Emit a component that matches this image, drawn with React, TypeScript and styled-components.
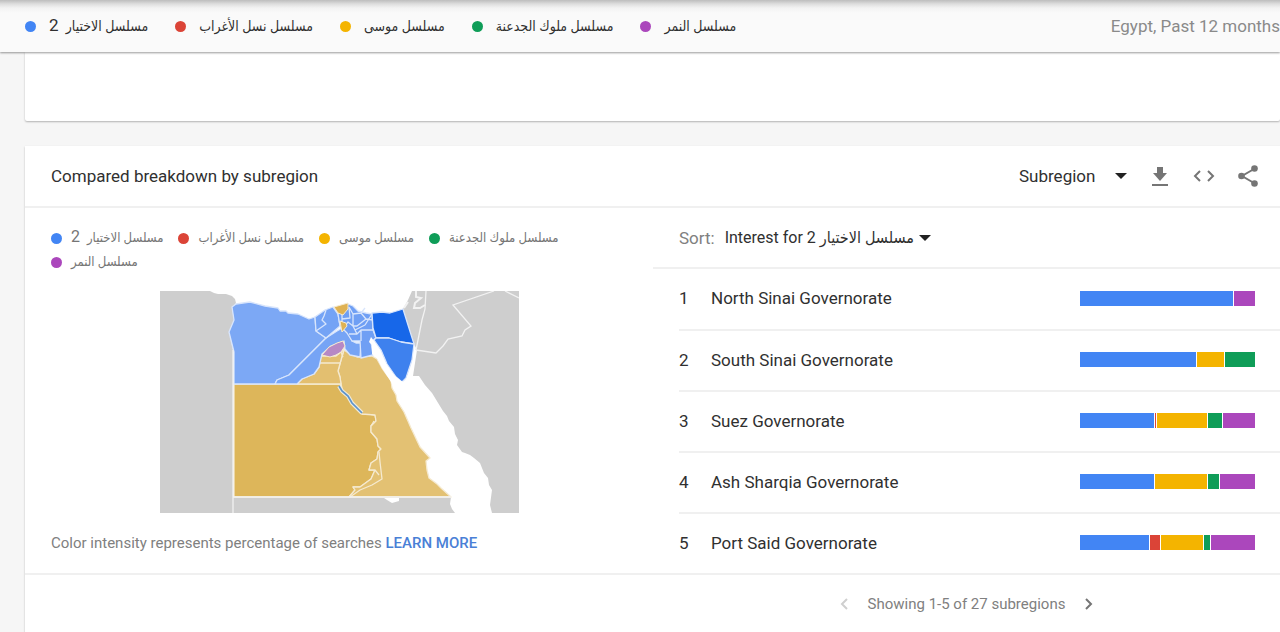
import React from "react";
import styled, { createGlobalStyle } from "styled-components";

const palette = {
  blue: "#4285f4",
  red: "#db4437",
  yellow: "#f4b400",
  green: "#0f9d58",
  purple: "#ab47bc",
};
type Tone = keyof typeof palette;

const terms: { label: string; part?: string; tone: Tone }[] = [
  { label: "مسلسل الاختيار", part: "2", tone: "blue" },
  { label: "مسلسل نسل الأغراب", tone: "red" },
  { label: "مسلسل موسى", tone: "yellow" },
  { label: "مسلسل ملوك الجدعنة", tone: "green" },
  { label: "مسلسل النمر", tone: "purple" },
];

const regions: { name: string; shares: [Tone, number][] }[] = [
  { name: "North Sinai Governorate", shares: [["blue", 153], ["purple", 21]] },
  { name: "South Sinai Governorate", shares: [["blue", 116], ["yellow", 27], ["green", 30]] },
  { name: "Suez Governorate", shares: [["blue", 74], ["red", 1], ["yellow", 50], ["green", 14], ["purple", 32]] },
  { name: "Ash Sharqia Governorate", shares: [["blue", 74], ["yellow", 52], ["green", 11], ["purple", 35]] },
  { name: "Port Said Governorate", shares: [["blue", 69], ["red", 10], ["yellow", 42], ["green", 6], ["purple", 44]] },
];

const GlobalStyle = createGlobalStyle`
  *, *::before, *::after { box-sizing: border-box; }
  body {
    margin: 0;
    background: #f6f6f6;
    color: #303030;
    font: 17px/24px Roboto, "DejaVu Sans Condensed", "DejaVu Sans", sans-serif;
    overflow-x: hidden;
  }
  button, select { font: inherit; color: inherit; }
`;

const TopBar = styled.header`
  position: sticky;
  top: 0;
  z-index: 2;
  display: flex;
  align-items: center;
  justify-content: space-between;
  height: 52px;
  padding-left: 25px;
  background: linear-gradient(#bdbdbd, #dedede 4px, #f3f3f3 8px, #fafafa 13px);
  box-shadow: 0 1px 2px rgba(0, 0, 0, 0.4);
`;

const TermList = styled.ul<{ $compact?: boolean }>`
  display: flex;
  flex-wrap: wrap;
  margin: 0;
  padding: 0;
  list-style: none;
  column-gap: ${(p) => (p.$compact ? "15px" : "27px")};
  color: ${(p) => (p.$compact ? "#757575" : "#303030")};
  font-size: ${(p) => (p.$compact ? "13px" : "14px")};
`;

const Term = styled.li<{ $compact?: boolean }>`
  display: flex;
  align-items: center;
  gap: ${(p) => (p.$compact ? "9px" : "13px")};
  white-space: nowrap;
`;

const PartNumber = styled.span<{ $compact?: boolean }>`
  margin-inline-start: 3px;
  font-size: ${(p) => (p.$compact ? "16px" : "17px")};
  line-height: 20px;
`;

const Dot = styled.span<{ $tone: Tone }>`
  width: 11px;
  height: 11px;
  border-radius: 50%;
  background: ${(p) => palette[p.$tone]};
`;

const Scope = styled.span`
  color: #8a8a8a;
  white-space: nowrap;
`;

const Page = styled.main`
  display: flex;
  flex-direction: column;
  gap: 25px;
  padding-left: 25px;
`;

const Card = styled.section`
  background: #fff;
  border-radius: 0 0 2px 2px;
  box-shadow: 0 1px 2px rgba(0, 0, 0, 0.28);
`;

const PreviousCard = styled(Card)`
  height: 69px;
`;

const CardHeader = styled.div`
  display: flex;
  align-items: center;
  justify-content: space-between;
  height: 62px;
  padding: 0 18px 0 26px;
  border-bottom: 2px solid #f0f0f0;
`;

const Title = styled.h2`
  margin: 0;
  font-size: 17px;
  font-weight: 400;
`;

const Tools = styled.div<{ $gap: number }>`
  display: flex;
  align-items: center;
  gap: ${(p) => p.$gap}px;
`;

const Picker = styled.span<{ $width: number; $size: number }>`
  display: grid;
  align-items: center;
  width: ${(p) => p.$width}px;
  font-size: ${(p) => p.$size}px;
  > * { grid-area: 1 / 1; }
  > svg { justify-self: end; pointer-events: none; }
`;

const Select = styled.select`
  appearance: none;
  width: 100%;
  padding: 0;
  border: 0;
  background: none;
`;

const IconButton = styled.button`
  display: grid;
  place-items: center;
  width: 28px;
  height: 28px;
  padding: 0;
  border: 0;
  background: none;
  color: #757575;
  &:disabled { color: #cfcfcf; }
`;

const Body = styled.div`
  display: grid;
  grid-template-columns: 628px 1fr;
`;

const MapPane = styled.div`
  display: flex;
  flex-direction: column;
  padding: 18px 26px;
`;

const MapDrawing = styled.svg`
  align-self: center;
  width: 359px;
  height: 222px;
  margin: 17px 0 18px;
`;

const Note = styled.p`
  margin: 0;
  color: #808080;
  font-size: 15px;
`;

const Learn = styled.a`
  color: #4a7fd6;
  font-weight: 500;
  text-decoration: none;
`;

const SortRow = styled.div`
  display: flex;
  align-items: center;
  gap: 10px;
  height: 61px;
  padding-left: 26px;
  border-bottom: 2px solid #f0f0f0;
  label { color: #808080; }
`;

const RegionList = styled.ol`
  margin: 0;
  padding: 0 0 0 26px;
  list-style: none;
`;

const Region = styled.li`
  display: grid;
  grid-template-columns: 32px 1fr 175px;
  align-items: center;
  height: 60px;
  padding: 0 25px 2px 0;
  & + & {
    height: 61px;
    border-top: 2px solid #f0f0f0;
  }
`;

const Bar = styled.div`
  display: flex;
  gap: 1px;
  height: 15px;
`;

const Share = styled.span<{ $tone: Tone; $weight: number }>`
  flex: ${(p) => p.$weight} 1 0;
  background: ${(p) => palette[p.$tone]};
`;

const Pager = styled.nav`
  display: flex;
  align-items: center;
  justify-content: center;
  gap: 10px;
  height: 62px;
  padding: 0 0 2px 628px;
  border-top: 2px solid #f0f0f0;
  color: #808080;
  font-size: 15px;
`;

const Caret = () => (
  <svg width="12" height="6" viewBox="0 0 12 6" aria-hidden="true">
    <path d="M0 0h12L6 6z" fill="#212121" />
  </svg>
);

const Legend = ({ compact }: { compact?: boolean }) => (
  <TermList $compact={compact}>
    {terms.map((t) => (
      <Term key={t.tone} $compact={compact}>
        <Dot $tone={t.tone} />
        <span dir="rtl">
          {t.label}
          {t.part && <PartNumber $compact={compact}> {t.part}</PartNumber>}
        </span>
      </Term>
    ))}
  </TermList>
);

const EgyptMap = () => (
  <MapDrawing viewBox="160 291 359 222" role="img" aria-label="Map of Egypt by subregion">
    <g fill="#cecece">
      <path d="M160 291H210L214 293 218 294 226 294 232 296 235 299 236 303 232 308 234 320 229 332 233 350V513H160Z" />
      <path d="M233 497H451L450 504 452 509 455 513H233Z" />
      <path d="M412 291H519V513H492L490 505 492 490 489 485 488 478 484 473 480 463 474 458 470 455 465 453 462 452 457 445 458 440 455 434 454 427 449 421 447 416 443 411 432 393 425 385 419 376 412 376 413 370 416 348 414 344 408 325 403 309 408 300Z" />
    </g>
    <path d="M384 498H399V501L392 503 387 500Z" fill="#fff" />
    <g stroke="#f5ead0" strokeWidth="1.3" strokeLinejoin="round">
      <path fill="#ddb65a" d="M234 384H340L343 393 348 397 353 405 362 414 369 414 375 415 376 421 371 426 371 432 377 439 378 446 381 449 378 452 377 459 371 463 369 470 375 470 371 479 360 487 353 487 355 490 349 497H234Z" />
      <path fill="#e3c173" d="M341 384 340 377 338 371 341 360 344 350 350 354 357 357 372 356 377 359 382 368 387 375 391 380 392 388 396 395 397 401 404 412 411 428 420 447 430 458 426 461 427 470 429 478 437 484 441 488 451 497H349L355 490 353 487 360 487 371 479 375 470 369 470 371 463 377 459 378 452 381 449 378 446 377 439 371 432 371 426 376 421 375 415 362 414 353 405 348 397 343 393Z" />
      <path fill="#e3bf70" d="M297 384 302 379 314 374 319 367 321 356 330 356 336 356 341 352 344 349 341 360 338 371 340 377 341 384Z" />
      <path fill="none" d="M320 363H341M345 344 341 352 343 357" />
      <path fill="none" d="M350 497 360 490 372 485 382 479 380 462 379 452M375 470 379 475M371 426 374 421" />
    </g>
    <g stroke="#d8e5fc" strokeWidth="1.3" strokeLinejoin="round">
      <path fill="#7ca8f5" d="M234 384V352L229 332 234 320 232 307 236 304 250 302 265 306 278 308 280 311 286 311 288 313 298 314 309 319 315 317 316 331 326 338 308 356 289 375 277 380 275 384Z" />
      <path fill="#76a4f5" d="M275 384 277 380 289 375 308 356 326 338 337 331 344 327 349 334 352 341 356 343 361 343 360 357 350 355 345 349 344 341 331 346 322 354 319 367 314 374 302 379 297 384Z" />
      <path fill="#74a3f5" d="M315 317 325 310 333 307 338 314 340 326 326 338 316 331Z" />
      <path fill="#6f9ff4" d="M348 304 353 306 358 311 366 313 372 314 373 330 376 338 371 342 373 355 361 358 360 341 352 341 347 333 340 326 338 314Z" />
      <path fill="none" d="M326 310 324 316 322 320 326 324 316 331M342 314V322M342 319 350 318 349 307M349 307 353 314 353 326 357 334 349 334M353 314 361 313 366 319 357 326 353 326M361 313 365 308M365 325 355 330M365 325 372 314M357 334 361 330 373 330M361 330 361 341M366 319 373 320M344 327 348 322 353 326" />
      <path fill="#1767e9" d="M372 313 382 312 390 313 403 309 408 325 414 344 401 342 389 338 376 338 373 328Z" />
      <path fill="#3e81ee" d="M376 338 389 338 401 342 414 344 412 360 406 378 402 382 396 377 387 364 381 350 374 340Z" />
    </g>
    <path d="M371 337 374 341 378 350 385 362 394 375 401 381 405 382 412 365 414 350 417 350 413 376 419 377 400 396 394 390 391 382 382 368 377 358 372 354 372 345 369 342Z" fill="#fff" />
    <g stroke="#f5ead0">
      <path fill="#dfb253" d="M334 307 341 305 348 303 348 309 343 315 338 313Z" />
      <path fill="#dfb253" d="M340 321 346 323 347 326 342 332 341 327Z" />
      <path fill="#b789c5" d="M322 355 329 347 337 343 343 341 345 346 341 352 336 355 330 357Z" />
    </g>
    <path d="M339 386 342 391 348 396 352 403 357 408 362 413" fill="none" stroke="#efeada" strokeWidth="4" />
    <path d="M339 386 342 391 348 396 352 403 357 408 362 413" fill="none" stroke="#5b93cc" strokeWidth="1.7" />
    <g fill="none" stroke="#f2f2f2" strokeWidth="1.3">
      <path d="M233 350V513M233 497H451" />
      <path d="M416 350 436 353 443 346 448 339 462 336 465 330 471 326 453 305 494 291M505 291 519 298M426 291 425 309 422 320 419 335 416 350" />
      <path d="M416 291 416 297 421 298 415 303 414 308 420 308 425 305M404 308 408 302" strokeWidth="2" />
    </g>
  </MapDrawing>
);

export default function App() {
  return (
    <>
      <GlobalStyle />
      <TopBar>
        <Legend />
        <Scope>Egypt, Past 12 months</Scope>
      </TopBar>
      <Page>
        <PreviousCard />
        <Card>
          <CardHeader>
            <Title>Compared breakdown by subregion</Title>
            <Tools $gap={19}>
              <Picker $width={108} $size={17}>
                <Select aria-label="Region level" defaultValue="sub">
                  <option value="sub">Subregion</option>
                  <option value="city">City</option>
                </Select>
                <Caret />
              </Picker>
              <Tools $gap={16}>
                <IconButton aria-label="Download">
                  <svg width="16" height="19" viewBox="0 0 16 19" fill="currentColor">
                    <path d="M5 0h6v6h4l-7 8-7-8h4zM0 17h16v2H0z" />
                  </svg>
                </IconButton>
                <IconButton aria-label="Embed">
                  <svg width="22" height="12" viewBox="0 0 22 12" fill="none" stroke="currentColor" strokeWidth="2">
                    <path d="M7 1 2 6l5 5M15 1l5 5-5 5" />
                  </svg>
                </IconButton>
                <IconButton aria-label="Share">
                  <svg width="20" height="22" viewBox="0 0 20 22" fill="currentColor">
                    <path d="M16 4 4 11l12 7" fill="none" stroke="currentColor" strokeWidth="2" />
                    <circle cx="16.500" cy="3.500" r="3.300" />
                    <circle cx="3.500" cy="11" r="3.300" />
                    <circle cx="16.500" cy="18.500" r="3.300" />
                  </svg>
                </IconButton>
              </Tools>
            </Tools>
          </CardHeader>
          <Body>
            <MapPane>
              <Legend compact />
              <EgyptMap />
              <Note>
                Color intensity represents percentage of searches <Learn href="#learn">LEARN MORE</Learn>
              </Note>
            </MapPane>
            <div>
              <SortRow>
                <label htmlFor="sort">Sort:</label>
                <Picker $width={206} $size={16}>
                  <Select id="sort" defaultValue="blue">
                    {terms.map((t) => (
                      <option key={t.tone} value={t.tone}>
                        {["Interest for", t.label, t.part].filter(Boolean).join(" ")}
                      </option>
                    ))}
                  </Select>
                  <Caret />
                </Picker>
              </SortRow>
              <RegionList>
                {regions.map((r, i) => (
                  <Region key={r.name}>
                    <span>{i + 1}</span>
                    <span>{r.name}</span>
                    <Bar>
                      {r.shares.map(([tone, weight]) => (
                        <Share key={tone} $tone={tone} $weight={weight} />
                      ))}
                    </Bar>
                  </Region>
                ))}
              </RegionList>
            </div>
          </Body>
          <Pager aria-label="Subregion pages">
            <IconButton aria-label="Previous" disabled>
              <svg width="8" height="12" viewBox="0 0 8 12" fill="none" stroke="currentColor" strokeWidth="2">
                <path d="M7 1 2 6l5 5" />
              </svg>
            </IconButton>
            <span>Showing 1-5 of 27 subregions</span>
            <IconButton aria-label="Next">
              <svg width="8" height="12" viewBox="0 0 8 12" fill="none" stroke="currentColor" strokeWidth="2">
                <path d="M1 1l5 5-5 5" />
              </svg>
            </IconButton>
          </Pager>
        </Card>
      </Page>
    </>
  );
}
